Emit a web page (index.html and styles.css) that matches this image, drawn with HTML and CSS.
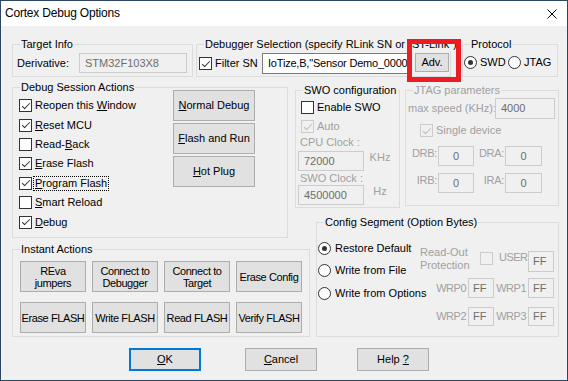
FILE: index.html
```html
<HTML>
   <HEAD>
      <TITLE>Cortex Debug Options</TITLE>
      <link rel="stylesheet" href="styles.css">
   </HEAD>
   <BODY>
      <DIV class='Window'>
         <DIV class='TitleBar'>
            <SPAN class='TitleText'>Cortex Debug Options</SPAN>
            <svg class='CloseX' width='10' height='10' viewBox='0 0 10 10'><path d='M0.5 0.5 L9.5 9.5 M9.5 0.5 L0.5 9.5' stroke='#000' stroke-width='1'/></svg>
         </DIV>
         <DIV class='Client'>
            <DIV class='TopRow'>
               <FIELDSET class='Group TargetGroup'>
                  <LEGEND>Target Info</LEGEND>
                  <DIV class='TargetLine'>
                     <SPAN class='DerivLabel'>Derivative:</SPAN>
                     <SPAN class='Edit Disabled DerivEdit'>STM32F103X8</SPAN>
                  </DIV>
               </FIELDSET>
               <FIELDSET class='Group DebuggerGroup'>
                  <LEGEND>Debugger Selection (specify RLink SN or "ST-Link")</LEGEND>
                  <DIV class='DebuggerLine'>
                     <SPAN class='Check On'></SPAN>
                     <SPAN class='FilterLabel'>Filter SN</SPAN>
                     <SPAN class='Edit SnEdit'>IoTize,B,"Sensor Demo_0000</SPAN>
                     <SPAN class='Button AdvButton'>Adv.</SPAN>
                  </DIV>
               </FIELDSET>
               <FIELDSET class='Group ProtocolGroup'>
                  <LEGEND>Protocol</LEGEND>
                  <DIV class='ProtocolLine'>
                     <SPAN class='Radio On'></SPAN>
                     <SPAN class='SwdLabel'>SWD</SPAN>
                     <SPAN class='Radio'></SPAN>
                     <SPAN class='JtagLabel'>JTAG</SPAN>
                  </DIV>
               </FIELDSET>
            </DIV>

            <DIV class='MidRow'>
               <DIV class='LeftCol'>
                  <FIELDSET class='Group DebugGroup'>
                     <LEGEND>Debug Session Actions</LEGEND>
                     <DIV class='DebugBody'>
                        <DIV class='CheckList'>
                           <DIV class='CheckRow'><SPAN class='Check On'></SPAN><SPAN class='CheckText'>Reopen this <u>W</u>indow</SPAN></DIV>
                           <DIV class='CheckRow'><SPAN class='Check On'></SPAN><SPAN class='CheckText'><u>R</u>eset MCU</SPAN></DIV>
                           <DIV class='CheckRow'><SPAN class='Check'></SPAN><SPAN class='CheckText'>Read-<u>B</u>ack</SPAN></DIV>
                           <DIV class='CheckRow'><SPAN class='Check On'></SPAN><SPAN class='CheckText'><u>E</u>rase Flash</SPAN></DIV>
                           <DIV class='CheckRow'><SPAN class='Check On'></SPAN><SPAN class='CheckText Focus'><u>P</u>rogram Flash</SPAN></DIV>
                           <DIV class='CheckRow'><SPAN class='Check'></SPAN><SPAN class='CheckText'><u>S</u>mart Reload</SPAN></DIV>
                           <DIV class='CheckRow'><SPAN class='Check On'></SPAN><SPAN class='CheckText'><u>D</u>ebug</SPAN></DIV>
                        </DIV>
                        <DIV class='SessionButtons'>
                           <SPAN class='Button SessionButton'><SPAN><u>N</u>ormal Debug</SPAN></SPAN>
                           <SPAN class='Button SessionButton'><SPAN><u>F</u>lash and Run</SPAN></SPAN>
                           <SPAN class='Button SessionButton'><SPAN><u>H</u>ot Plug</SPAN></SPAN>
                        </DIV>
                     </DIV>
                  </FIELDSET>
                  <FIELDSET class='Group InstantGroup'>
                     <LEGEND>Instant Actions</LEGEND>
                     <DIV class='InstantGrid'>
                        <SPAN class='Button SmallButton'>REva<BR>jumpers</SPAN>
                        <SPAN class='Button SmallButton'>Connect to<BR>Debugger</SPAN>
                        <SPAN class='Button SmallButton'>Connect to<BR>Target</SPAN>
                        <SPAN class='Button SmallButton'>Erase Config</SPAN>
                        <SPAN class='Button SmallButton'>Erase FLASH</SPAN>
                        <SPAN class='Button SmallButton'>Write FLASH</SPAN>
                        <SPAN class='Button SmallButton'>Read FLASH</SPAN>
                        <SPAN class='Button SmallButton'>Verify FLASH</SPAN>
                     </DIV>
                  </FIELDSET>
               </DIV>

               <DIV class='RightCol'>
                  <DIV class='RightTop'>
                     <FIELDSET class='Group SwoGroup'>
                        <LEGEND>SWO configuration</LEGEND>
                        <DIV class='SwoCheckRow FirstRow'><SPAN class='Check'></SPAN><SPAN class='CheckText'>Enable SWO</SPAN></DIV>
                        <DIV class='SwoCheckRow'><SPAN class='Check On Dim'></SPAN><SPAN class='CheckText Gray'>Auto</SPAN></DIV>
                        <DIV class='SwoLabel Gray'>CPU Clock :</DIV>
                        <DIV class='SwoEditRow CpuRow'>
                           <SPAN class='Edit Disabled ClockEdit'>72000</SPAN>
                           <SPAN class='Unit Gray'>KHz</SPAN>
                        </DIV>
                        <DIV class='SwoLabel SecondLabel Gray'>SWO Clock :</DIV>
                        <DIV class='SwoEditRow'>
                           <SPAN class='Edit Disabled ClockEdit'>4500000</SPAN>
                           <SPAN class='Unit Gray'>Hz</SPAN>
                        </DIV>
                     </FIELDSET>
                     <FIELDSET class='Group JtagGroup'>
                        <LEGEND class='Gray'>JTAG parameters</LEGEND>
                        <DIV class='SpeedRow'>
                           <SPAN class='SpeedLabel Gray'>max speed (KHz):</SPAN>
                           <SPAN class='Edit Disabled SpeedEdit'>4000</SPAN>
                        </DIV>
                        <DIV class='SingleRow'><SPAN class='Check On Dim'></SPAN><SPAN class='CheckText Gray'>Single device</SPAN></DIV>
                        <DIV class='RegRow'>
                           <SPAN class='RegLabel Gray'>DRB:</SPAN>
                           <SPAN class='Edit Disabled RegEdit'>0</SPAN>
                           <SPAN class='RegLabel RegLabelB Gray'>DRA:</SPAN>
                           <SPAN class='Edit Disabled RegEdit RegEditB'>0</SPAN>
                        </DIV>
                        <DIV class='RegRow SecondReg'>
                           <SPAN class='RegLabel Gray'>IRB:</SPAN>
                           <SPAN class='Edit Disabled RegEdit'>0</SPAN>
                           <SPAN class='RegLabel RegLabelB Gray'>IRA:</SPAN>
                           <SPAN class='Edit Disabled RegEdit RegEditB'>0</SPAN>
                        </DIV>
                     </FIELDSET>
                  </DIV>
                  <FIELDSET class='Group ConfigGroup'>
                     <LEGEND>Config Segment (Option Bytes)</LEGEND>
                     <DIV class='ConfigBody'>
                        <DIV class='RadioCol'>
                           <DIV class='RadioRow'><SPAN class='Radio On'></SPAN><SPAN class='RadioText'>Restore Default</SPAN></DIV>
                           <DIV class='RadioRow'><SPAN class='Radio'></SPAN><SPAN class='RadioText'>Write from File</SPAN></DIV>
                           <DIV class='RadioRow'><SPAN class='Radio'></SPAN><SPAN class='RadioText'>Write from Options</SPAN></DIV>
                        </DIV>
                        <DIV class='BytesPanel'>
                           <DIV class='BytesRow FirstBytes'>
                              <SPAN class='ProtText Gray'>Read-Out<BR>Protection</SPAN>
                              <SPAN class='Check Dim UserCheck'></SPAN>
                              <SPAN class='UserLabel Gray'>USER</SPAN>
                              <SPAN class='Edit Disabled ByteEdit'>FF</SPAN>
                           </DIV>
                           <DIV class='BytesRow'>
                              <SPAN class='WrpLabel Gray'>WRP0</SPAN>
                              <SPAN class='Edit Disabled ByteEdit'>FF</SPAN>
                              <SPAN class='WrpLabel WrpLabelB Gray'>WRP1</SPAN>
                              <SPAN class='Edit Disabled ByteEdit'>FF</SPAN>
                           </DIV>
                           <DIV class='BytesRow LastBytes'>
                              <SPAN class='WrpLabel Gray'>WRP2</SPAN>
                              <SPAN class='Edit Disabled ByteEdit'>FF</SPAN>
                              <SPAN class='WrpLabel WrpLabelB Gray'>WRP3</SPAN>
                              <SPAN class='Edit Disabled ByteEdit'>FF</SPAN>
                           </DIV>
                        </DIV>
                     </DIV>
                  </FIELDSET>
               </DIV>
            </DIV>

            <DIV class='ButtonRow'>
               <SPAN class='Button DialogButton Default'><SPAN><u>O</u>K</SPAN></SPAN>
               <SPAN class='Button DialogButton CancelButton'><SPAN><u>C</u>ancel</SPAN></SPAN>
               <SPAN class='Button DialogButton HelpButton'><SPAN>Help <u>?</u></SPAN></SPAN>
            </DIV>
         </DIV>
         <DIV class='Highlight'></DIV>
      </DIV>
   </BODY>
</HTML>
```

FILE: styles.css
```css
*
{
   box-sizing: border-box;
}
BODY
{
   margin:      0;
   font-family: 'Liberation Sans', Arial, sans-serif;
   font-size:   11px;
   line-height: 13px;
   color:       #000;
   background:  #f0f0f0;
}
u
{
   text-underline-offset: 1px;
}
.Gray
{
   color: #a0a0a0;
}

/* window frame */
.Window
{
   position:   relative;
   width:      568px;
   height:     381px;
   border:     1px solid #2b4562;
   background: #f0f0f0;
}
.TitleBar
{
   display:      flex;
   align-items:  center;
   height:       25px;
   padding-left: 4px;
   background:   #fff;
}
.TitleText
{
   font-size:      12px;
   letter-spacing: -0.2px;
}
.CloseX
{
   margin-left:  auto;
   margin-right: 10px;
}
.Client
{
   display:        flex;
   flex-direction: column;
   align-items:    flex-start;
   padding-left:   11px;
}
.Highlight
{
   position: absolute;
   left:     406px;
   top:      38px;
   width:    54px;
   height:   43px;
   border:   5px solid #ed1c24;
}

/* group boxes */
.Group
{
   margin:    0;
   padding:   0;
   min-width: 0;
   border:    1px solid #dcdcdc;
}
.Group LEGEND
{
   margin-left: 7px;
   padding:     0 1px;
   line-height: 13px;
   white-space: nowrap;
}

/* controls */
.Check
{
   position:   relative;
   flex:       none;
   width:      13px;
   height:     13px;
   border:     1px solid #333;
   background: #fff;
}
.Check.On::after
{
   content:      '';
   position:     absolute;
   left:         3.5px;
   top:          0.5px;
   width:        3px;
   height:       7px;
   border:       solid #333;
   border-width: 0 1px 1px 0;
   transform:    rotate(45deg);
}
.Check.Dim
{
   border-color: #cccccc;
   background:   #f0f0f0;
}
.Check.Dim::after
{
   border-color: #bcbcbc;
}
.Radio
{
   position:      relative;
   flex:          none;
   width:         13px;
   height:        13px;
   border:        1px solid #333;
   border-radius: 50%;
   background:    #fff;
}
.Radio.On::after
{
   content:       '';
   position:      absolute;
   left:          3px;
   top:           3px;
   width:         5px;
   height:        5px;
   border-radius: 50%;
   background:    #333;
}
.Edit
{
   display:      flex;
   align-items:  center;
   flex:         none;
   padding-left: 5px;
   border:       1px solid #7a7a7a;
   background:   #fff;
   white-space:  nowrap;
   overflow:     hidden;
}
.Edit.Disabled
{
   border-color: #cccccc;
   background:   #f0f0f0;
   color:        #6d6d6d;
}
.Button
{
   display:         flex;
   align-items:     center;
   justify-content: center;
   flex:            none;
   text-align:      center;
   background:      #e1e1e1;
   border:          1px solid #adadad;
   white-space:     nowrap;
}
.CheckText
{
   margin-left: 3px;
   white-space: nowrap;
}
.CheckText.Focus
{
   margin-left: 1px;
   padding:     0 1px;
   border:      1px dotted #000;
}

/* top row */
.TopRow
{
   display:     flex;
   align-items: flex-start;
   margin-top:  12px;
}
.TargetGroup
{
   width:  181px;
   height: 39px;
}
.TargetLine
{
   display:      flex;
   align-items:  center;
   height:       20px;
   margin-top:   2px;
   padding-left: 4px;
}
.DerivLabel
{
   width: 62px;
}
.DerivEdit
{
   width:  108px;
   height: 20px;
}
.DebuggerGroup
{
   width:       255px;
   height:      39px;
   margin-left: 3px;
}
.DebuggerLine
{
   display:      flex;
   align-items:  center;
   height:       21px;
   margin-top:   2px;
   padding-left: 2px;
}
.FilterLabel
{
   width:       47px;
   margin-left: 3px;
}
.SnEdit
{
   width:          150px;
   height:         21px;
   letter-spacing: -0.2px;
}
.AdvButton
{
   align-self:  flex-start;
   width:       34px;
   height:      19px;
   margin-left: 3px;
}
.ProtocolGroup
{
   width:       96px;
   height:      39px;
   margin-left: 11px;
}
.ProtocolLine
{
   display:      flex;
   align-items:  center;
   height:       19px;
   margin-top:   2px;
   padding-left: 1px;
}
.SwdLabel
{
   width:       28px;
   margin-left: 3px;
}
.JtagLabel
{
   margin-left: 3px;
}

/* middle */
.MidRow
{
   display:     flex;
   align-items: flex-start;
}
.LeftCol
{
   display:        flex;
   flex-direction: column;
   width:          283px;
}
.DebugGroup
{
   width:      276px;
   height:     157px;
   margin-top: 4px;
}
.DebugBody
{
   display:      flex;
   padding-left: 6px;
}
.CheckList
{
   display:        flex;
   flex-direction: column;
   width:          154px;
   padding-top:    2px;
}
.CheckRow
{
   display:     flex;
   align-items: center;
   height:      19.4px;
}
.SessionButtons
{
   display:        flex;
   flex-direction: column;
   gap:            2px;
   margin-top:     -4px;
}
.SessionButton
{
   width:  82px;
   height: 31px;
}
.InstantGroup
{
   width:      298px;
   height:     94px;
   margin-top: 5px;
}
.InstantGrid
{
   display:               grid;
   grid-template-columns: repeat(4, 66px);
   grid-auto-rows:        31px;
   column-gap:            6px;
   row-gap:               10px;
   padding:               5px 0 0 7px;
}
.SmallButton
{
   line-height:    12px;
   letter-spacing: -0.4px;
}

.RightCol
{
   display:        flex;
   flex-direction: column;
}
.RightTop
{
   display:     flex;
   align-items: flex-start;
   margin-top:  7px;
}
.SwoGroup
{
   width:  105px;
   height: 124px;
}
.SwoCheckRow
{
   display:      flex;
   align-items:  center;
   height:       19px;
   padding-left: 5px;
}
.SwoCheckRow.FirstRow
{
   margin-top: 1px;
}
.SwoLabel
{
   padding-left: 4px;
   white-space:  nowrap;
}
.SwoLabel.SecondLabel
{
   margin-top: 1px;
}
.SwoEditRow
{
   display:      flex;
   align-items:  flex-start;
   padding-left: 2px;
}
.SwoEditRow.CpuRow
{
   margin-top: 2px;
}
.ClockEdit
{
   width:  66px;
   height: 20px;
}
.Unit
{
   width:       22px;
   margin-left: 5px;
   text-align:  center;
}
.JtagGroup
{
   width:       154px;
   height:      122px;
   margin-left: 5px;
}
.SpeedRow
{
   display:      flex;
   align-items:  center;
   height:       21px;
   margin-top:   1px;
   padding-left: 2px;
}
.SpeedLabel
{
   width:       87px;
   white-space: nowrap;
}
.SpeedEdit
{
   width:  60px;
   height: 21px;
}
.SingleRow
{
   display:      flex;
   align-items:  center;
   height:       19px;
   margin-top:   2px;
   padding-left: 14px;
}
.RegRow
{
   display:      flex;
   align-items:  flex-start;
   height:       20px;
   margin-top:   6px;
   padding-left: 5px;
}
.RegRow.SecondReg
{
   margin-top: 7px;
}
.RegLabel
{
   width:          27px;
   margin-top:     1px;
   padding-right:  1px;
   text-align:     right;
   letter-spacing: -0.3px;
}
.RegLabelB
{
   width:       30px;
   margin-left: 1px;
}
.RegEdit
{
   justify-content: center;
   width:           36px;
   height:          20px;
   padding-left:    0;
}
.RegEditB
{
   width: 37px;
}
.ConfigGroup
{
   width:       243px;
   height:      121px;
   margin-top:  8px;
   margin-left: 21px;
}
.ConfigBody
{
   display: flex;
}
.RadioCol
{
   display:        flex;
   flex-direction: column;
   gap:            8.5px;
   width:          103px;
   padding-top:    12px;
   padding-left:   1px;
}
.RadioRow
{
   display:     flex;
   align-items: center;
   height:      14px;
}
.RadioText
{
   margin-left: 4px;
   white-space: nowrap;
}
.BytesPanel
{
   display:        flex;
   flex-direction: column;
   margin-top:     22px;
}
.BytesRow
{
   display:     flex;
   align-items: center;
   height:      20px;
   margin-top:  6px;
}
.BytesRow.FirstBytes
{
   align-items: flex-start;
   height:      21px;
   margin-top:  0;
}
.BytesRow.LastBytes
{
   height:     19px;
   margin-top: 9px;
}
.ProtText
{
   width:      60px;
   margin-top: -5px;
}
.UserCheck
{
   margin-top: 1px;
}
.UserLabel
{
   width:          29px;
   margin-left:    6px;
   letter-spacing: -0.5px;
}
.ByteEdit
{
   align-self:   stretch;
   width:        26px;
   padding-left: 4px;
}
.WrpLabel
{
   width:          48px;
   padding-right:  2px;
   text-align:     right;
   letter-spacing: -0.5px;
}
.WrpLabelB
{
   width:         34px;
   padding-right: 2px;
}

/* dialog buttons */
.ButtonRow
{
   display:     flex;
   margin-top:  11px;
   margin-left: 117px;
}
.DialogButton
{
   width:  72px;
   height: 23px;
}
.DialogButton.Default
{
   border: 2px solid #0078d7;
}
.CancelButton
{
   margin-left: 44px;
}
.HelpButton
{
   margin-left: 40px;
}
```
